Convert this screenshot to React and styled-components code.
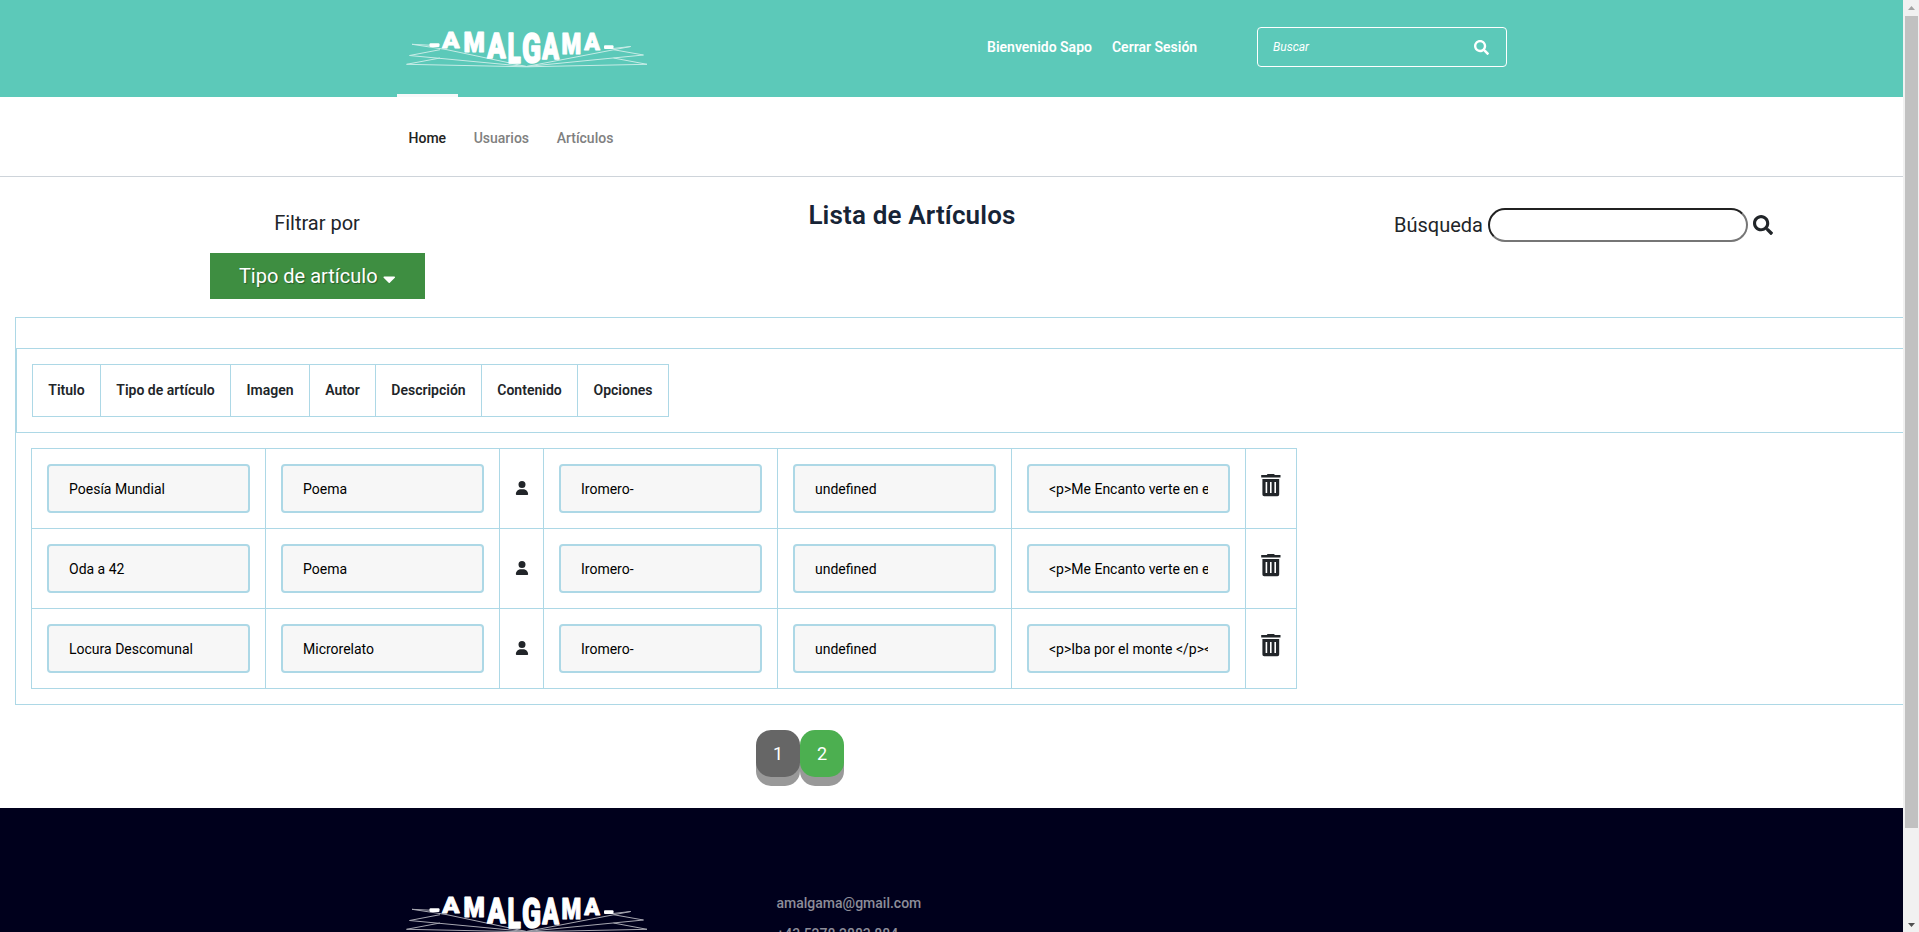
import React from "react";
import styled, { createGlobalStyle } from "styled-components";
import { FaSearch, FaCaretDown } from "react-icons/fa";
import { FaUser } from "react-icons/fa6";

const GlobalStyle = createGlobalStyle`
  *, *::before, *::after { box-sizing: border-box; }
  body {
    margin: 0;
    overflow: hidden;
    background: #fff;
    color: #212529;
    font: 400 14px/21px Roboto, "Liberation Sans", sans-serif;
  }
`;

const Screen = styled.div`
  display: flex;
  width: 100%;
  height: 100vh;
  overflow: hidden;
`;

const Page = styled.div`
  flex: 1;
  min-width: 0;
  height: 100%;
  overflow: hidden;
`;

const TopBar = styled.header`
  display: flex;
  align-items: flex-start;
  height: 97px;
  padding-left: 396px;
  background: #5cc9b9;
`;

const LogoArt = styled.svg`
  display: block;
  flex: none;
  width: 260px;
  height: 60px;
  margin-top: 20px;
`;

const Session = styled.nav`
  display: flex;
  gap: 20px;
  width: 270px;
  margin: 37px 0 0 331px;
  color: #fff;
  font-weight: 600;
  line-height: 20px;
  white-space: nowrap;
`;

const SiteSearch = styled.div`
  display: flex;
  align-items: center;
  justify-content: space-between;
  width: 250px;
  height: 40px;
  margin-top: 27px;
  padding: 0 17px 0 15px;
  border: 1px solid #fff;
  border-radius: 4px;
  color: #fff;
  font-size: 12px;
  font-style: italic;
`;

const NavBar = styled.nav`
  display: flex;
  gap: 4.6px;
  height: 80px;
  padding-left: 397px;
  border-bottom: 1px solid #ced4da;
`;

const NavItem = styled.a`
  height: 82px;
  margin-top: -3px;
  padding: 31px 11.5px 0;
  border-top: 3px solid ${(p) => (p.$active ? "#f8f9fa" : "transparent")};
  color: ${(p) => (p.$active ? "#222" : "#808080")};
  font-weight: 500;
  line-height: 20px;
`;

const Controls = styled.section`
  display: grid;
  grid-template-columns: 634px 556px 1fr;
  height: 140px;
  font-size: 20px;
`;

const Filter = styled.div`
  display: flex;
  flex-direction: column;
  align-items: center;
  padding-top: 31px;
  line-height: 30px;
`;

const FilterButton = styled.button`
  display: flex;
  align-items: center;
  justify-content: center;
  gap: 5px;
  width: 215px;
  height: 46px;
  margin-top: 15px;
  padding: 0;
  border: 0;
  background: #3e8e41;
  color: #fff;
  font: 400 20px/30px Roboto, sans-serif;
  text-shadow: 1px 1px 1px rgba(0, 0, 0, 0.35);
  svg { width: 12.5px; margin-top: 6px; }
`;

const Title = styled.h2`
  margin: 23px 0 0;
  color: #172436;
  font-size: 26px;
  font-weight: 600;
  letter-spacing: 0.16px;
  line-height: 31px;
  text-align: center;
`;

const TableSearch = styled.label`
  display: flex;
  align-items: center;
  height: 34px;
  margin: 31px 0 0 204px;
  gap: 5px;
`;

const RoundInput = styled.input`
  width: 260px;
  height: 34px;
  border: 2px inset #767676;
  border-radius: 17px;
  background: #fff;
`;

const TableFrame = styled.section`
  width: 1990px;
  margin-left: 15px;
  padding-top: 30px;
  padding-bottom: 15px;
  border: 1px solid lightblue;
`;

const HeadFrame = styled.div`
  height: 85px;
  padding: 15px;
  border: 1px solid lightblue;
`;

const HeadRow = styled.div`
  display: grid;
  grid-template-columns: 68px 130px 79px 66px 106px 96px 91px;
  width: max-content;
  height: 53px;
  border: solid lightblue;
  border-width: 1px 0 1px 1px;
`;

const HeadCell = styled.div`
  display: flex;
  align-items: center;
  justify-content: center;
  border-right: 1px solid lightblue;
  font-weight: 600;
  white-space: nowrap;
`;

const Body = styled.div`
  width: max-content;
  margin: 15px 0 0 15px;
  border: solid lightblue;
  border-width: 1px 0 0 1px;
`;

const Row = styled.div`
  display: grid;
  grid-template-columns: 234px 234px 44px 234px 234px 234px 51px;
  height: 80px;
`;

const Cell = styled.div`
  display: flex;
  align-items: flex-start;
  padding: 15px;
  border: solid lightblue;
  border-width: 0 1px 1px 0;
`;

const IconCell = styled(Cell)`
  justify-content: center;
  padding: ${(p) => p.$top}px 0 0;
`;

const Field = styled.input`
  width: 203px;
  height: 49px;
  padding: 0 20px;
  border: 2px solid lightblue;
  border-radius: 4px;
  background: #f7f7f7;
  color: #000;
  font: 400 14px/21px Roboto, sans-serif;
`;

const Pagination = styled.nav`
  display: flex;
  height: 103px;
  padding: 25px 0 0 756px;
`;

const PageButton = styled.button`
  width: 44px;
  height: 47px;
  padding: 0;
  border: 0;
  border-radius: 15px;
  background: ${(p) => (p.$current ? "#666" : "#4caf50")};
  box-shadow: 0 9px #999;
  color: #fff;
  font: 400 18px/27px Roboto, sans-serif;
`;

const Footer = styled.footer`
  display: flex;
  height: 320px;
  padding: 57px 0 0 396px;
  background: #00001c;
`;

const Contact = styled.address`
  margin: 23px 0 0 120.5px;
  color: #8d8d99;
  font-style: normal;
  font-weight: 500;
  line-height: 31px;
`;

const ScrollTrack = styled.div`
  display: flex;
  flex-direction: column;
  align-items: center;
  flex: none;
  width: 16px;
  height: 100%;
  padding: 6px 0 5px 1px;
  background: #f1f1f1;
`;

const ScrollThumb = styled.div`
  width: 13px;
  height: 812px;
  margin: 6px 0 auto;
  background: #c1c1c1;
`;

const Arrow = styled.svg`
  display: block;
  flex: none;
  width: 7px;
  height: 4px;
  fill: ${(p) => p.$color};
`;

// letter, left, baseline, width, height
const letters = [
  ["A", 46.3, 28, 17.5, 16],
  ["M", 68.5, 32.3, 19.5, 20],
  ["A", 91.3, 37.8, 18.7, 25.5],
  ["L", 112.5, 42.6, 12, 30.3],
  ["G", 127, 42.6, 17, 30.3],
  ["A", 146.3, 38.6, 17, 26.3],
  ["M", 166.6, 33.6, 18, 21.3],
  ["A", 188.2, 29.6, 15.8, 17.3],
];
const glyphs = {
  A: { left: 0, width: 6.9 },
  M: { left: 0.45, width: 8 },
  L: { left: 0.45, width: 4.9 },
  G: { left: 0.35, width: 6.1 },
};

function Logo() {
  return (
    <LogoArt viewBox="0 0 260 60" fill="#fff" aria-label="Amalgama">
      <g fill="none" stroke="#fff" strokeWidth="1" opacity="0.65">
        <path d="M40 25.5 16 24.3 50 29.5 130.5 46.5" />
        <path d="M44 29.7 13.5 35.5l117 11M44 38l-33.5 6.3 120 2.5" />
        <path d="M217 28.5 234.7 26.5 130.5 46.5" />
        <path d="M217.5 29.7 247.5 35 130.5 46.5M217.5 38l33.5 6.3-120.5 2.5" />
      </g>
      <rect x="33.5" y="23.2" width="10" height="3.8" rx="1" />
      <rect x="208" y="25.2" width="9.5" height="3.8" rx="1" />
      {letters.map(([ch, x, y, w, h], i) => (
        <text
          key={i}
          transform={`translate(${x} ${y}) scale(${w / glyphs[ch].width} ${h / 7.11})`}
          x={-glyphs[ch].left}
          fontFamily="Roboto, sans-serif"
          fontSize="10"
          fontWeight="900"
          stroke="#fff"
          strokeWidth="0.35"
          strokeLinejoin="round"
        >
          {ch}
        </text>
      ))}
    </LogoArt>
  );
}

function TrashIcon() {
  return (
    <svg width="20" height="23" viewBox="0 0 20 23" fill="#212529">
      <path d="M6.5 0h6.6l.7 1.1h5.7v2.5H.2V1.1h5.6z" />
      <path
        fillRule="evenodd"
        d="M1.4 5h16.8v15.5a1.8 1.8 0 0 1-1.8 1.8H3.2a1.8 1.8 0 0 1-1.8-1.8zM4.6 8v11h1.6V8zm4.4 0v11h1.6V8zm4.4 0v11H15V8z"
      />
    </svg>
  );
}

const headings = ["Titulo", "Tipo de artículo", "Imagen", "Autor", "Descripción", "Contenido", "Opciones"];

const articles = [
  ["Poesía Mundial", "Poema", "<p>Me Encanto verte en el parque</p>"],
  ["Oda a 42", "Poema", "<p>Me Encanto verte en el parque</p>"],
  ["Locura Descomunal", "Microrelato", "<p>Iba por el monte </p><p></p>"],
];

function TextCell({ value }) {
  return (
    <Cell>
      <Field defaultValue={value} />
    </Cell>
  );
}

export default function App() {
  return (
    <Screen>
      <GlobalStyle />
      <Page>
        <TopBar>
          <Logo />
          <Session>
            <span>Bienvenido Sapo</span>
            <span>Cerrar Sesión</span>
          </Session>
          <SiteSearch>
            <span>Buscar</span>
            <FaSearch size={15} />
          </SiteSearch>
        </TopBar>
        <NavBar>
          <NavItem $active>Home</NavItem>
          <NavItem>Usuarios</NavItem>
          <NavItem>Artículos</NavItem>
        </NavBar>
        <Controls>
          <Filter>
            <span>Filtrar por</span>
            <FilterButton>
              Tipo de artículo
              <FaCaretDown size={20} />
            </FilterButton>
          </Filter>
          <Title>Lista de Artículos</Title>
          <TableSearch>
            <span>Búsqueda</span>
            <RoundInput />
            <FaSearch size={20} />
          </TableSearch>
        </Controls>
        <TableFrame>
          <HeadFrame>
            <HeadRow>
              {headings.map((h) => (
                <HeadCell key={h}>{h}</HeadCell>
              ))}
            </HeadRow>
          </HeadFrame>
          <Body>
            {articles.map(([title, kind, content]) => (
              <Row key={title}>
                <TextCell value={title} />
                <TextCell value={kind} />
                <IconCell $top={32}>
                  <FaUser size={14} />
                </IconCell>
                <TextCell value="Iromero-" />
                <TextCell value="undefined" />
                <TextCell value={content} />
                <IconCell $top={25}>
                  <TrashIcon />
                </IconCell>
              </Row>
            ))}
          </Body>
        </TableFrame>
        <Pagination>
          <PageButton $current>1</PageButton>
          <PageButton>2</PageButton>
        </Pagination>
        <Footer>
          <Logo />
          <Contact>
            <div>amalgama@gmail.com</div>
            <div>+43 5278 2883 884</div>
          </Contact>
        </Footer>
      </Page>
      <ScrollTrack>
        <Arrow viewBox="0 0 7 4" $color="#a3a3a3">
          <path d="M0 4 3.5 0 7 4z" />
        </Arrow>
        <ScrollThumb />
        <Arrow viewBox="0 0 7 4" $color="#505050">
          <path d="M0 0h7L3.5 4z" />
        </Arrow>
      </ScrollTrack>
    </Screen>
  );
}
